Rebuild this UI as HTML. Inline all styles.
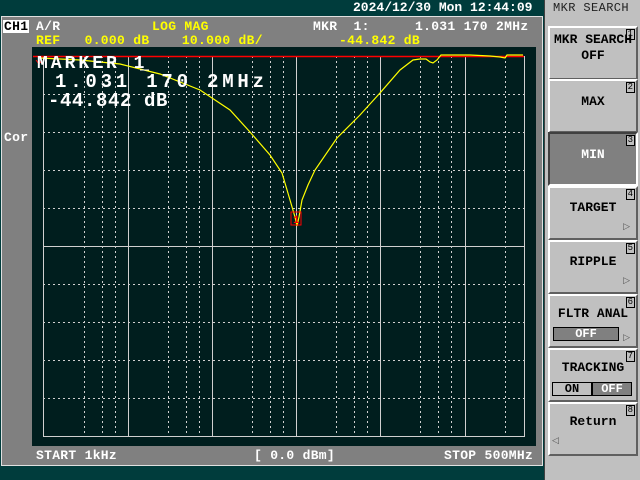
<!DOCTYPE html>
<html><head><style>
*{margin:0;padding:0}
body{width:640px;height:480px;background:#003c3c;position:relative;overflow:hidden;font-family:"Liberation Mono",monospace;font-weight:bold}
.t{position:absolute;white-space:pre;font-size:13px;line-height:13px;letter-spacing:.3px}
.btn{position:absolute;left:548px;width:86px;height:50px;background:#c0c0c0;border-top:2px solid #fff;border-left:2px solid #fff;border-bottom:2px solid #606060;border-right:2px solid #606060;text-align:center;color:#000;font-size:13px}
.num{position:absolute;right:1px;top:1px;font-size:9px;line-height:9px;border:1px solid #000;padding:0 1px;font-weight:normal}
.arr{position:absolute;right:6px;bottom:6px;font-size:9px;color:#555;font-weight:normal}
</style></head><body>
<div class="t" style="left:353px;top:1px;color:#fff;font-size:13px;letter-spacing:0px">2024/12/30 Mon 12:44:09</div>
<div style="position:absolute;left:1px;top:16px;width:540px;height:448px;background:#808080;border:1px solid #e0e0e0"></div>
<div class="t" style="left:3px;top:20px;background:#fff;color:#000;padding:0 1px">CH1</div>
<div class="t" style="left:36px;top:20px;color:#fff">A/R</div>
<div class="t" style="left:152px;top:20px;color:#ff0">LOG MAG</div>
<div class="t" style="left:313px;top:20px;color:#fff">MKR  1:</div>
<div class="t" style="left:415px;top:20px;color:#fff">1.031 170 2MHz</div>
<div class="t" style="left:36px;top:34px;color:#ff0">REF   0.000 dB    10.000 dB/</div>
<div class="t" style="left:339px;top:34px;color:#ff0">-44.842 dB</div>
<div class="t" style="left:4px;top:131px;color:#fff">Cor</div>
<div class="t" style="left:36px;top:449px;color:#fff">START 1kHz</div>
<div class="t" style="left:254px;top:449px;color:#fff">[ 0.0 dBm]</div>
<div class="t" style="left:444px;top:449px;color:#fff">STOP 500MHz</div>
<svg style="position:absolute;left:0;top:0" width="640" height="480">
<rect x="32" y="47" width="504" height="399" fill="#001e1e"/>
<g stroke="#d0d0d0" stroke-width="1" fill="none">
<rect x="43.5" y="56.5" width="481" height="380"/>
<path d="M128.5 56V437M212.5 56V437M296.5 56V437M380.5 56V437M465.5 56V437M43 246.5H525"/>
<g stroke-dasharray="2,3">
<path d="M84.5 56V437M102.5 56V437M115.5 56V437M168.5 56V437M186.5 56V437M199.5 56V437M252.5 56V437M270.5 56V437M283.5 56V437M336.5 56V437M354.5 56V437M367.5 56V437M420.5 56V437M438.5 56V437M451.5 56V437M505.5 56V437"/>
<path d="M43 94.5H525M43 132.5H525M43 170.5H525M43 208.5H525M43 284.5H525M43 322.5H525M43 360.5H525M43 398.5H525"/>
</g></g>
<line x1="33" y1="56.5" x2="524" y2="56.5" stroke="#f00" stroke-width="1.5"/>
<polyline fill="none" stroke="#ff0" stroke-width="1.2" points="40,58 80,60 120,64 160,74 200,90 230,110 250,132 270,155 282,173 290,200 295,217 297,226 299,217 302,200 308,185 315,170 337,138 360,115 380,93 400,70 413,60 420,59 426,59 430,62 433,63 437,60 441,55 470,55 490,56 500,57 505,58 507,55 515,55 523,55"/>
<rect x="291" y="212" width="10" height="13" fill="none" stroke="#f00"/>
<text x="293" y="223" fill="#f00" font-size="11" font-family="Liberation Mono" font-weight="bold">1</text>
<path d="M36 60l3 4 3-4" stroke="#f00" fill="none"/>
<text x="37" y="68" fill="#fff" font-size="18" font-family="Liberation Mono" letter-spacing="3">MARKER 1</text>
<line x1="140" y1="70" x2="149" y2="70" stroke="#fff"/>
<text x="55" y="87" fill="#fff" font-size="19" font-family="Liberation Mono" letter-spacing="3.8">1.031 170 2MHz</text>
<text x="48" y="106" fill="#fff" font-size="19" font-family="Liberation Mono" letter-spacing="0.6">-44.842 dB</text>
</svg>
<div style="position:absolute;left:544px;top:0;width:96px;height:480px;background:#c0c0c0;border-left:1px solid #404040"></div>
<div class="t" style="left:553px;top:2px;color:#222;font-weight:normal;font-size:12px;letter-spacing:.4px">MKR SEARCH</div>
<div class="btn" style="top:26px"><span class="num">1</span><div style="padding-top:4px;line-height:16px">MKR SEARCH<br>OFF</div></div>
<div class="btn" style="top:79px"><span class="num">2</span><div style="padding-top:13px">MAX</div></div>
<div class="btn" style="top:132px;background:#808080;border-top-color:#404040;border-left-color:#404040;border-bottom-color:#fff;border-right-color:#fff;color:#fff"><span class="num" style="color:#000;border-color:#000;background:#c0c0c0">3</span><div style="padding-top:13px">MIN</div></div>
<div class="btn" style="top:186px"><span class="num">4</span><div style="padding-top:12px">TARGET</div><span class="arr">▷</span></div>
<div class="btn" style="top:240px"><span class="num">5</span><div style="padding-top:12px">RIPPLE</div><span class="arr">▷</span></div>
<div class="btn" style="top:294px"><span class="num">6</span><div style="padding-top:10px">FLTR ANAL</div>
<div style="position:absolute;left:3px;top:31px;width:64px;height:12px;background:#808080;border:1px solid #000;color:#fff;font-size:12px;line-height:12px">OFF</div><span class="arr" style="bottom:3px">▷</span></div>
<div class="btn" style="top:348px"><span class="num">7</span><div style="padding-top:10px">TRACKING</div>
<div style="position:absolute;left:2px;top:32px;width:38px;height:12px;border:1px solid #000;font-size:12px;line-height:12px">ON</div>
<div style="position:absolute;left:42px;top:32px;width:38px;height:12px;border:1px solid #000;background:#808080;color:#fff;font-size:12px;line-height:12px">OFF</div></div>
<div class="btn" style="top:402px"><span class="num">8</span><div style="padding-top:10px">Return</div><span class="arr" style="left:2px;right:auto;bottom:8px">◁</span></div>
</body></html>
